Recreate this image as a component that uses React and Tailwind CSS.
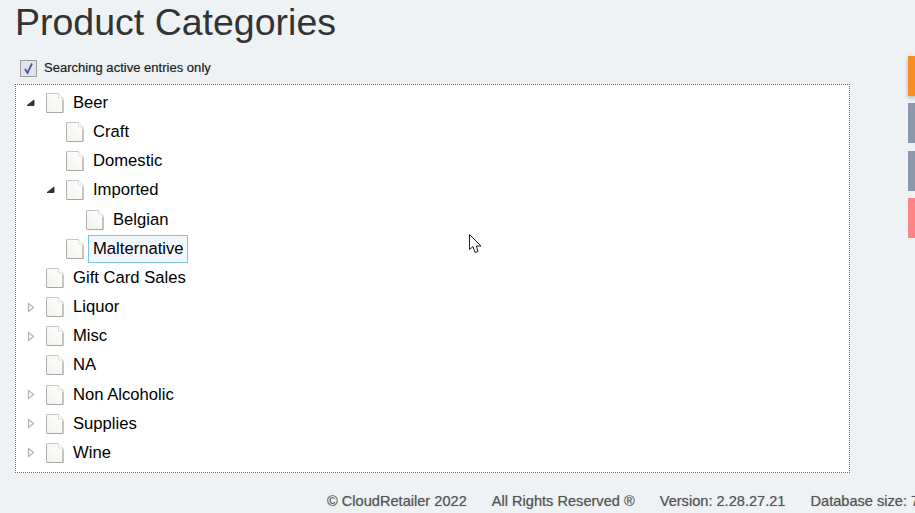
import React from 'react';

const tree = [
  { label: 'Beer', depth: 0, toggle: 'open' },
  { label: 'Craft', depth: 1 },
  { label: 'Domestic', depth: 1 },
  { label: 'Imported', depth: 1, toggle: 'open' },
  { label: 'Belgian', depth: 2 },
  { label: 'Malternative', depth: 1, selected: true },
  { label: 'Gift Card Sales', depth: 0 },
  { label: 'Liquor', depth: 0, toggle: 'closed' },
  { label: 'Misc', depth: 0, toggle: 'closed' },
  { label: 'NA', depth: 0 },
  { label: 'Non Alcoholic', depth: 0, toggle: 'closed' },
  { label: 'Supplies', depth: 0, toggle: 'closed' },
  { label: 'Wine', depth: 0, toggle: 'closed' },
];

const FileIcon = () => (
  <svg width="18" height="20" viewBox="0 0 18 20" className="shrink-0">
    <defs>
      <linearGradient id="page" x1="1" y1="0" x2="0" y2="1">
        <stop offset="0" stopColor="#ffffff" />
        <stop offset="1" stopColor="#f1f3ea" />
      </linearGradient>
    </defs>
    <path d="M0.5 0.5H12.5L17 5V19.5H0.5Z" fill="url(#page)" stroke="#c6c6c6" />
    <path d="M12.5 0.5V5H17" fill="#fff" stroke="#dedede" />
    <path d="M1 19.5H17V7" fill="none" stroke="#a6a6a6" />
    <path d="M0.5 2V19" fill="none" stroke="#b0b0b0" />
  </svg>
);

const Toggle = ({ state }) => {
  if (state === 'open') {
    return (
      <svg width="10" height="10" viewBox="0 0 10 10">
        <path d="M1 7.5H8V2Z" fill="#333" stroke="#222" strokeWidth="0.8" />
      </svg>
    );
  }
  if (state === 'closed') {
    return (
      <svg width="10" height="11" viewBox="0 0 10 11">
        <path d="M2.5 1.5L7.5 5.5L2.5 9.5Z" fill="#fff" stroke="#b4b4b4" strokeWidth="1.2" />
      </svg>
    );
  }
  return null;
};

const Row = ({ item }) => {
  const indent = { 0: 'pl-[10px]', 1: 'pl-[30px]', 2: 'pl-[50px]' }[item.depth];
  return (
    <li className={`flex h-[29.17px] items-center ${indent}`}>
      <span className="flex w-[20px] shrink-0 items-center">
        <Toggle state={item.toggle} />
      </span>
      <FileIcon />
      <span
        className={`ml-[4px] border pl-[4px] pr-[3px] leading-[26px] ${
          item.selected ? 'border-[#7fc4e6] bg-[#f0f8fe]' : 'border-transparent'
        }`}
      >
        {item.label}
      </span>
    </li>
  );
};

export default function App() {
  return (
    <div className="relative flex h-[513px] w-[915px] overflow-hidden bg-[#eef2f5] font-['Liberation_Sans',Arial,sans-serif] text-[#333]">
      <div className="w-[908px] shrink-0 pl-[15px]">
        <h1 className="h-[45px] text-[37.5px] leading-[45px] text-[#333]">Product Categories</h1>
        <label className="mt-[8px] ml-[5px] flex h-[30px] items-center gap-[7px] text-[13.06px] text-[#222] [text-shadow:0_0_1px_rgba(0,0,0,0.35)]">
          <span className="flex h-[17px] w-[17px] items-center justify-center border border-[#9c9c9c] bg-[#dfe3ec]">
            <svg width="13" height="13" viewBox="0 0 13 13">
              <path d="M3 7L5.5 11L10 1.5" fill="none" stroke="#4a5a8c" strokeWidth="1.8" />
            </svg>
          </span>
          Searching active entries only
        </label>
        <ul className="mt-[1px] h-[389px] w-[835px] border border-dotted border-[#666] bg-white pt-[3.4px] text-[16.64px] text-black">
          {tree.map((item) => (
            <Row key={item.label} item={item} />
          ))}
        </ul>
        <footer className="mt-[19px] flex h-[20px] items-center gap-[25px] whitespace-nowrap pl-[312px] text-[14.6px] text-[#555] [text-shadow:0_0_1px_rgba(0,0,0,0.35)]">
          <span>© CloudRetailer 2022</span>
          <span>All Rights Reserved ®</span>
          <span>Version: 2.28.27.21</span>
          <span>Database size: 7</span>
        </footer>
      </div>
      <div className="flex w-[7px] shrink-0 flex-col gap-[7.3px] pt-[56px]">
        <div className="h-[40px] bg-[#f78d23] shadow-[0_2px_4px_rgba(0,0,0,0.25)]" />
        <div className="h-[40px] bg-[#8b98ab]" />
        <div className="h-[40px] bg-[#8b98ab]" />
        <div className="h-[40px] bg-[#ff8487]" />
      </div>
      <svg width="14" height="21" viewBox="0 0 14 21" className="absolute left-[468px] top-[234px]">
        <path d="M1.5 0.5V15.5L5 12.5L7 18.5L10 17.5L8.3 12H13Z" fill="#fff" stroke="#222" strokeWidth="1" />
      </svg>
    </div>
  );
}
